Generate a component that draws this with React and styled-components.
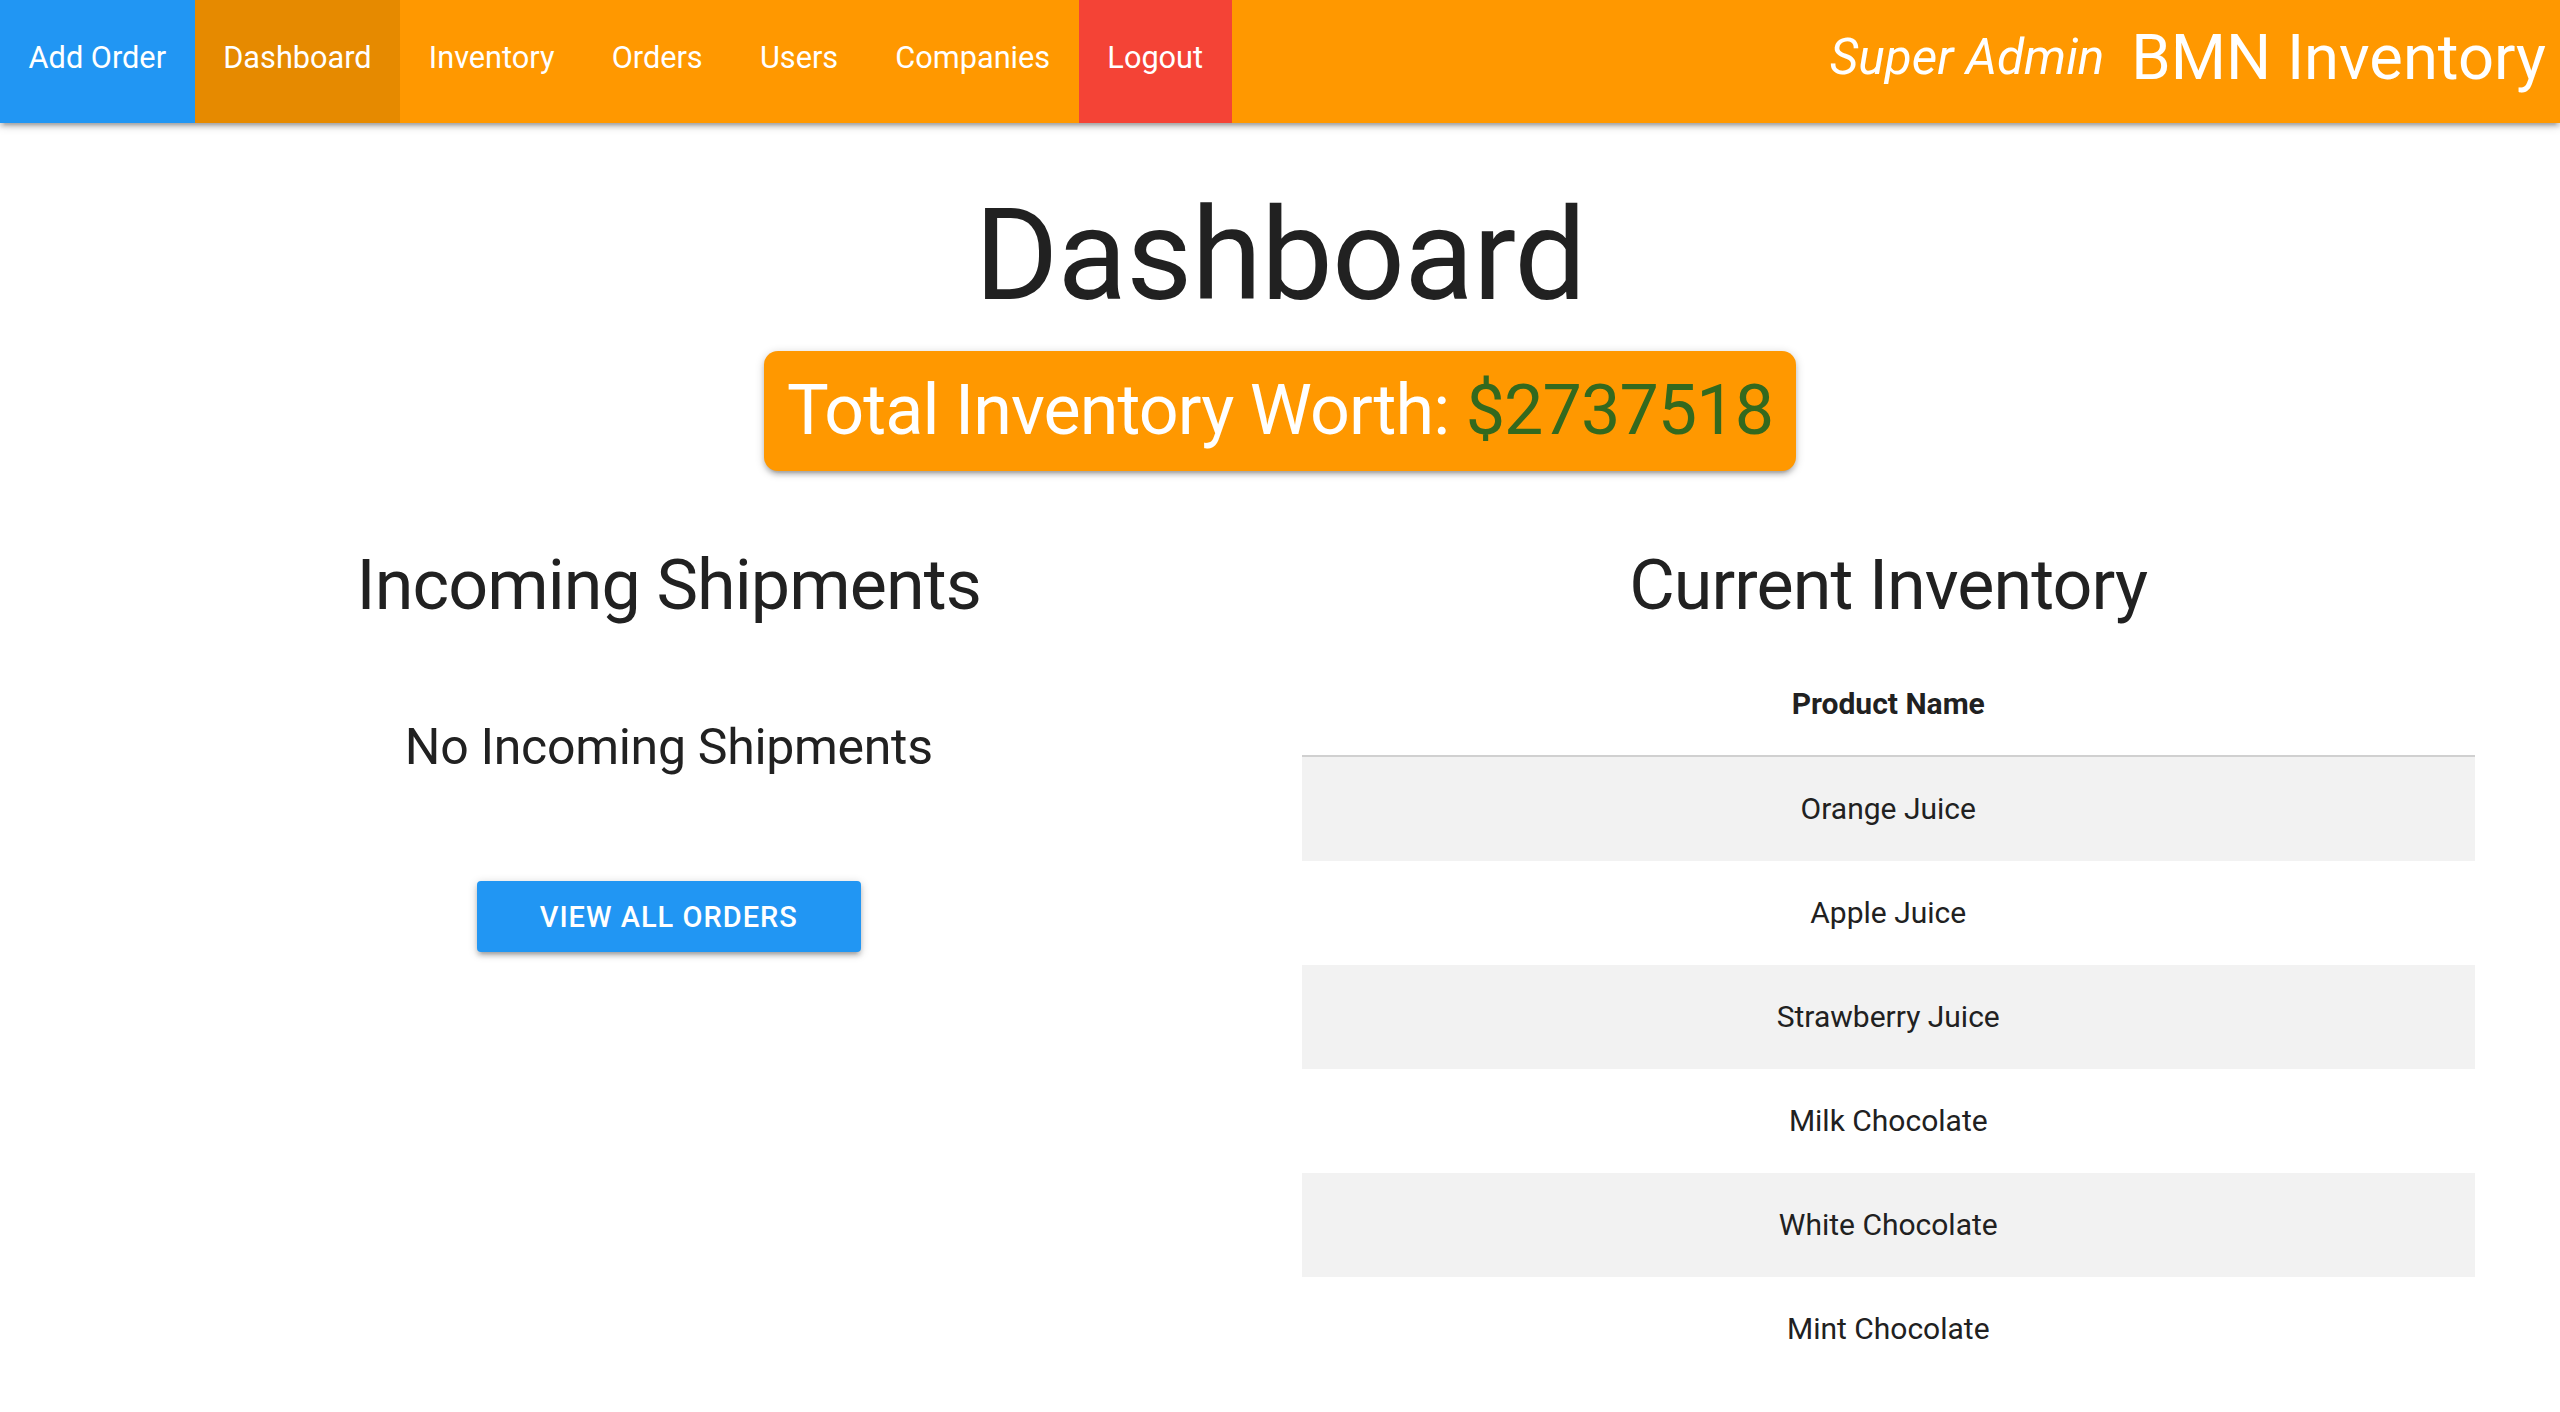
import React from "react";
import styled, { createGlobalStyle } from "styled-components";

const GlobalStyle = createGlobalStyle`
  html, body {
    margin: 0;
    padding: 0;
    background: #ffffff;
  }
  body {
    font-family: Roboto, "Liberation Sans", Arial, sans-serif;
    color: rgba(0, 0, 0, 0.87);
  }
  * { box-sizing: border-box; }
`;

const Nav = styled.nav`
  position: relative;
  z-index: 2;
  display: flex;
  justify-content: space-between;
  align-items: stretch;
  height: 123px;
  background: #ff9800;
  box-shadow: 0 4px 4px 0 rgba(0, 0, 0, 0.14), 0 6px 2px -4px rgba(0, 0, 0, 0.12),
    0 2px 10px 0 rgba(0, 0, 0, 0.2);
`;

const NavList = styled.ul`
  display: flex;
  margin: 0;
  padding: 0;
  list-style: none;
`;

const toneColors = {
  blue: "#2196f3",
  active: "#e68a00",
  red: "#f44336",
  plain: "transparent",
};

const NavLink = styled.li`
  display: flex;
  align-items: center;
  padding: 0 28.6px 7px;
  font-size: 30.7px;
  line-height: 1;
  color: #ffffff;
  background: ${(p) => toneColors[p.$tone || "plain"]};
  cursor: pointer;
  white-space: nowrap;
`;

const Brand = styled.div`
  display: flex;
  align-items: center;
  gap: 27px;
  padding: 0 14px 7px 0;
  color: #ffffff;
  white-space: nowrap;
`;

const Role = styled.span`
  font-size: 49.5px;
  font-style: italic;
  line-height: 1;
`;

const Logo = styled.span`
  font-size: 63.3px;
  line-height: 1;
`;

const Main = styled.main`
  display: flex;
  flex-direction: column;
  align-items: center;
`;

const Title = styled.h1`
  margin: 62px 0 0;
  font-size: 128px;
  font-weight: 400;
  line-height: 141px;
  letter-spacing: -0.007em;
  color: #212121;
`;

const WorthBadge = styled.h4`
  margin: 25px 0 0;
  padding: 21px 23px 22px;
  font-size: 70px;
  font-weight: 400;
  line-height: 77px;
  letter-spacing: -0.013em;
  color: #ffffff;
  background: #ff9800;
  border-radius: 14px;
  box-shadow: 0 4px 4px 0 rgba(0, 0, 0, 0.14), 0 6px 2px -4px rgba(0, 0, 0, 0.12),
    0 2px 10px 0 rgba(0, 0, 0, 0.2);
`;

const Amount = styled.span`
  color: #33691e;
`;

const Columns = styled.section`
  align-self: stretch;
  display: grid;
  grid-template-columns: 1fr 1fr;
  column-gap: 46px;
  margin-top: 76px;
  padding: 0 85px 40px 82px;
`;

const Column = styled.div`
  display: flex;
  flex-direction: column;
  align-items: center;
`;

const SectionTitle = styled.h4`
  margin: 0;
  font-size: 70px;
  font-weight: 400;
  line-height: 77px;
  letter-spacing: -0.013em;
  color: #212121;
`;

const EmptyNote = styled.h5`
  margin: 96px 0 0;
  font-size: 50px;
  font-weight: 400;
  line-height: 55px;
  letter-spacing: -0.006em;
  color: #212121;
`;

const PrimaryButton = styled.button`
  margin-top: 106px;
  width: 384px;
  height: 71px;
  border: none;
  border-radius: 4px;
  background: #2196f3;
  color: #ffffff;
  font-family: Roboto, "Liberation Sans", Arial, sans-serif;
  font-size: 29px;
  font-weight: 500;
  letter-spacing: 1px;
  text-transform: uppercase;
  cursor: pointer;
  box-shadow: 0 4px 4px 0 rgba(0, 0, 0, 0.14), 0 6px 2px -4px rgba(0, 0, 0, 0.12),
    0 2px 10px 0 rgba(0, 0, 0, 0.2);
`;

const Table = styled.table`
  margin-top: 28px;
  width: 100%;
  border-collapse: collapse;
  border-spacing: 0;
`;

const HeadCell = styled.th`
  padding: 29.75px 10px;
  font-size: 30px;
  font-weight: 700;
  line-height: 43.5px;
  text-align: center;
  color: #212121;
  border-bottom: 2px solid #d0d0d0;
`;

const Row = styled.tr`
  background: ${(p) => (p.$striped ? "#f2f2f2" : "transparent")};
`;

const Cell = styled.td`
  padding: 30px 10px 30px;
  font-size: 30px;
  line-height: 44px;
  text-align: center;
  color: #212121;
`;

const navItems = [
  { label: "Add Order", tone: "blue" },
  { label: "Dashboard", tone: "active" },
  { label: "Inventory" },
  { label: "Orders" },
  { label: "Users" },
  { label: "Companies" },
  { label: "Logout", tone: "red" },
];

const products = [
  "Orange Juice",
  "Apple Juice",
  "Strawberry Juice",
  "Milk Chocolate",
  "White Chocolate",
  "Mint Chocolate",
];

export default function App() {
  return (
    <>
      <GlobalStyle />
      <Nav>
        <NavList>
          {navItems.map((item) => (
            <NavLink key={item.label} $tone={item.tone}>
              {item.label}
            </NavLink>
          ))}
        </NavList>
        <Brand>
          <Role>Super Admin</Role>
          <Logo>BMN Inventory</Logo>
        </Brand>
      </Nav>
      <Main>
        <Title>Dashboard</Title>
        <WorthBadge>
          Total Inventory Worth: <Amount>$2737518</Amount>
        </WorthBadge>
        <Columns>
          <Column>
            <SectionTitle>Incoming Shipments</SectionTitle>
            <EmptyNote>No Incoming Shipments</EmptyNote>
            <PrimaryButton>View all orders</PrimaryButton>
          </Column>
          <Column>
            <SectionTitle>Current Inventory</SectionTitle>
            <Table>
              <thead>
                <tr>
                  <HeadCell>Product Name</HeadCell>
                </tr>
              </thead>
              <tbody>
                {products.map((name, i) => (
                  <Row key={name} $striped={i % 2 === 0}>
                    <Cell>{name}</Cell>
                  </Row>
                ))}
              </tbody>
            </Table>
          </Column>
        </Columns>
      </Main>
    </>
  );
}
